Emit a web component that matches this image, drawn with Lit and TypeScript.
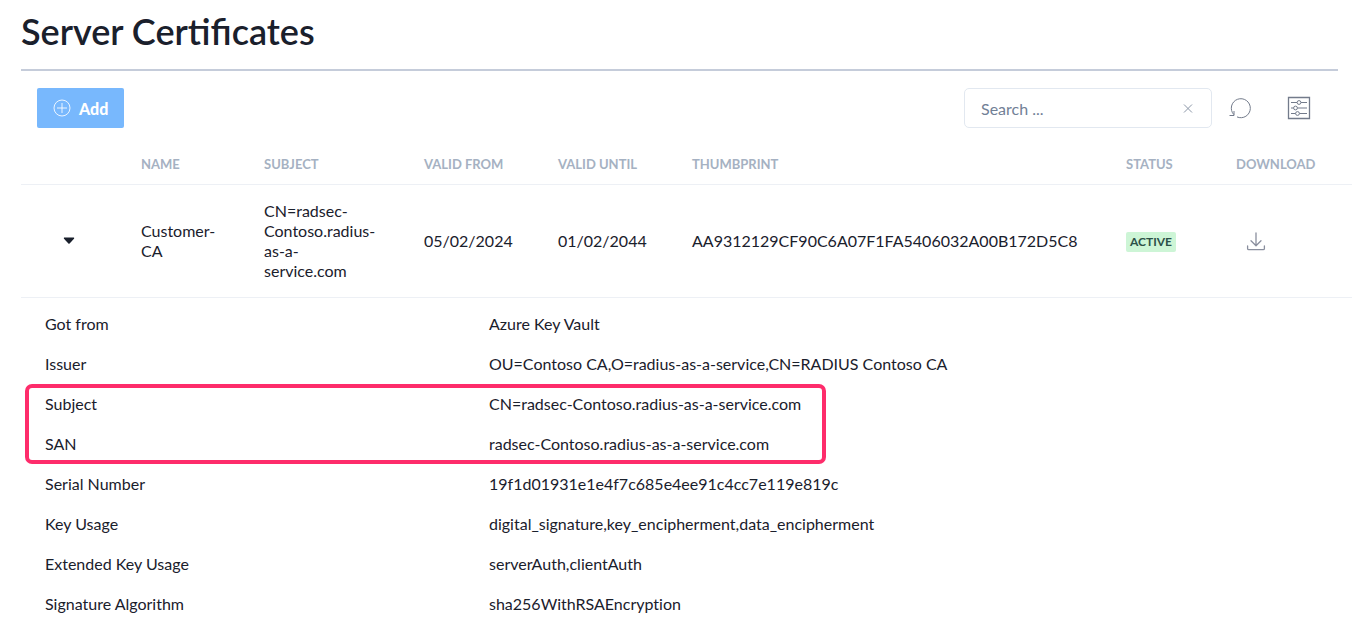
import { LitElement, html, css } from "lit";
import { customElement, state } from "lit/decorators.js";

const details: [string, string][] = [
  ["Got from", "Azure Key Vault"],
  ["Issuer", "OU=Contoso CA,O=radius-as-a-service,CN=RADIUS Contoso CA"],
  ["Subject", "CN=radsec-Contoso.radius-as-a-service.com"],
  ["SAN", "radsec-Contoso.radius-as-a-service.com"],
  ["Serial Number", "19f1d01931e1e4f7c685e4ee91c4cc7e119e819c"],
  ["Key Usage", "digital_signature,key_encipherment,data_encipherment"],
  ["Extended Key Usage", "serverAuth,clientAuth"],
  ["Signature Algorithm", "sha256WithRSAEncryption"],
];

@customElement("app-root")
export class AppRoot extends LitElement {
  @state() private open = true;

  static styles = css`
    :host {
      display: block;
      overflow: hidden;
      font: 16px/20px Lato, sans-serif;
      font-variant-ligatures: none;
      color: #1a202c;
      background: #fff;
    }
    * { box-sizing: border-box; }
    .head {
      margin: 0 18px 0 21px;
      padding: 7px 0 13px;
      border-bottom: 2px solid #c5ccda;
    }
    h1 {
      margin: 0;
      font-size: 36px;
      line-height: 49px;
      font-weight: 600;
      font-variant-ligatures: normal;
    }
    button { font: inherit; color: inherit; border: 0; padding: 0; background: none; cursor: pointer; }
    svg { display: block; fill: none; stroke: currentColor; }
    .bar { display: flex; align-items: center; margin: 17px 45px 0 37px; }
    .add {
      display: flex; align-items: center; gap: 8px;
      height: 40px; padding: 0 16px; border-radius: 2px;
      background: #78b8fd; color: #fff; font-weight: 900;
    }
    .add span { padding-top: 2px; }
    .search {
      display: flex; align-items: center;
      width: 248px; height: 40px; margin-left: auto; padding: 0 16px;
      border: 1px solid #e2e8f0; border-radius: 5px;
    }
    .search input {
      flex: 1; min-width: 0; border: 0; outline: 0; padding: 2px 0 0;
      font: inherit; background: none; color: inherit;
    }
    .search input::placeholder { color: #718096; opacity: 1; }
    .clear { color: #8c97a8; }
    .tool { color: #737b8b; }
    .refresh { margin-left: 17px; }
    .filter { margin-left: 36px; }
    table { border-collapse: collapse; table-layout: fixed; }
    .certs { margin: 15px 0 0 21px; width: calc(100% - 25px); }
    th, td { text-align: left; padding: 0; font-weight: 400; }
    .certs th { height: 41px; padding-top: 1px; font-size: 13px; font-weight: 700; color: #a5b1c2; }
    .certs tr { border-bottom: 1px solid #edf0f5; }
    .certs td { height: 113px; padding-right: 44px; }
    .c0 { width: 120px; }
    .c1 { width: 123px; }
    .c2 { width: 160px; }
    .c3, .c4 { width: 134px; }
    .c6 { width: 110px; }
    .c7 { width: 116px; }
    .toggle { display: block; margin-left: 42px; }
    .badge {
      display: inline-block; padding: 0 4px; border-radius: 2px;
      font-size: 12px; font-weight: 700; background: #cdf5d6; color: #2c5048;
    }
    .dl { display: block; margin-left: 10px; color: #8a8f9e; }
    .details { width: 100%; margin-top: 6px; }
    .details th { width: 489px; padding-left: 45px; }
    .details td, .details th { height: 40px; }
    .wrap { position: relative; }
    .mark {
      position: absolute; left: 25px; top: 80px; width: 801px; height: 80px;
      border: 4px solid #fe2c6b; border-radius: 7px; pointer-events: none;
    }
  `;

  render() {
    return html`
      <header class="head"><h1>Server Certificates</h1></header>
      <div class="bar">
        <button class="add">
          <svg width="18" height="18" viewBox="0 0 18 18" stroke-opacity=".85"><circle cx="9" cy="9" r="8"/><path d="M9 4v10M4 9h10"/></svg>
          <span>Add</span>
        </button>
        <div class="search">
          <input type="text" aria-label="Search" placeholder="Search ..." />
          <button class="clear" aria-label="Clear search">
            <svg width="14" height="14" viewBox="0 0 14 14"><path d="M3 3.500l8 8M11 3.500l-8 8"/></svg>
          </button>
        </div>
        <button class="tool refresh" aria-label="Refresh">
          <svg width="22" height="22" viewBox="0 0 22 22"><path d="M4.800 17.600A9.500 9.500 0 1 1 8 19.900M.5 18.500H5V14"/></svg>
        </button>
        <button class="tool filter" aria-label="Table settings">
          <svg width="24" height="24" viewBox="0 0 24 24">
            <path stroke-width="1.300" d="M1.500 1.500h21v21h-21z"/>
            <path stroke-width="1.200" d="M4 6.500h6M14 6.500h6M4 12h2.500M10.500 12H20M4 17.500h4.500M12.500 17.500H20"/>
            <circle cx="12" cy="6.500" r="1.900"/><circle cx="8.500" cy="12" r="1.900"/><circle cx="10.500" cy="17.500" r="1.900"/>
          </svg>
        </button>
      </div>
      <table class="certs">
        <thead>
          <tr>
            <th class="c0"></th><th class="c1">NAME</th><th class="c2">SUBJECT</th>
            <th class="c3">VALID FROM</th><th class="c4">VALID UNTIL</th><th>THUMBPRINT</th>
            <th class="c6">STATUS</th><th class="c7">DOWNLOAD</th>
          </tr>
        </thead>
        <tbody>
          <tr>
            <td>
              <button class="toggle" aria-label="Toggle details" aria-expanded=${this.open} @click=${() => (this.open = !this.open)}>
                <svg width="12" height="8" viewBox="0 0 12 8"><path fill="#1a202c" stroke="none" d="M1.200.5h9.600q.8.500.2 1.200L6.600 6.600q-.6.500-1.200 0L1 1.700Q.4 1 1.200.5z"/></svg>
              </button>
            </td>
            <td>Customer-CA</td>
            <td>CN=radsec-Contoso.radius-as-a-service.com</td>
            <td>05/02/2024</td>
            <td>01/02/2044</td>
            <td>AA9312129CF90C6A07F1FA5406032A00B172D5C8</td>
            <td><span class="badge">ACTIVE</span></td>
            <td>
              <button class="dl" aria-label="Download certificate">
                <svg width="20" height="20" viewBox="0 0 20 20" stroke-width="1.300" stroke-linecap="round" stroke-linejoin="round"><path d="M10 2v12.500M5 9.800l5 5 5-5M1.600 15v2.500q0 1.200 1.200 1.200h14.400q1.200 0 1.200-1.200V15"/></svg>
              </button>
            </td>
          </tr>
        </tbody>
      </table>
      ${this.open
        ? html`<div class="wrap">
            <table class="details">
              <tbody>
                ${details.map(([k, v]) => html`<tr><th scope="row">${k}</th><td>${v}</td></tr>`)}
              </tbody>
            </table>
            <div class="mark"></div>
          </div>`
        : null}
    `;
  }
}
